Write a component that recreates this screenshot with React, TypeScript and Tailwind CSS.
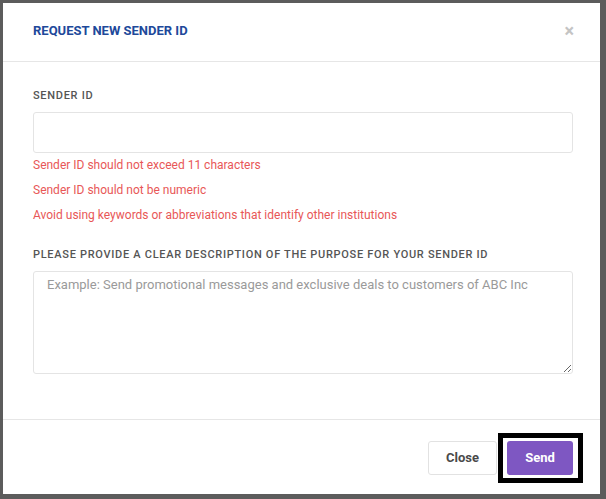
const ERRORS = [
  "Sender ID should not exceed 11 characters",
  "Sender ID should not be numeric",
  "Avoid using keywords or abbreviations that identify other institutions",
];

export default function App() {
  return (
    <div
      className="h-[499px] w-full overflow-hidden bg-[#5c5c5c] pt-[3px] pl-[3px] pr-[6px]"
      style={{ fontFamily: "Roboto, 'Liberation Sans', sans-serif" }}
    >
      <div className="flex h-[491px] flex-col bg-white">
        {/* Header */}
        <div className="flex items-center justify-between border-b border-[#e6e6e6] pt-[19px] pb-[21px] pl-[30px] pr-[27px]">
          <h2 className="text-[13px] leading-[18px] font-bold text-[#20489a]">
            REQUEST NEW SENDER ID
          </h2>
          <button className="mr-[-1px] text-[18px] leading-[18px] font-bold text-[#c4c4c4]">
            ×
          </button>
        </div>

        {/* Body */}
        <div className="flex flex-col pt-[26px] pb-[45px] pl-[30px] pr-[27px]">
          <label className="text-[11px] leading-4 font-medium tracking-[0.7px] text-[#555]">
            SENDER ID
          </label>
          <input
            className="mt-[8px] h-[41px] rounded-[3px] border border-[#e4e4e4] px-3 text-sm outline-none"
            type="text"
          />
          <div className="flex flex-col">
            {ERRORS.map((e) => (
              <p key={e} className="text-[12px] leading-[25px] text-[#e85757]">
                {e}
              </p>
            ))}
          </div>

          <label className="mt-[19px] text-[11px] leading-4 font-medium tracking-[0.7px] text-[#555]">
            PLEASE PROVIDE A CLEAR DESCRIPTION OF THE PURPOSE FOR YOUR SENDER ID
          </label>
          <textarea
            className="mt-[8px] h-[103px] rounded-[3px] border border-[#e4e4e4] px-[13px] pt-[3px] pb-[5px] text-[13px] leading-5 outline-none placeholder:text-[#9a9a9a]"
            placeholder="Example: Send promotional messages and exclusive deals to customers of ABC Inc"
          />
        </div>

        {/* Footer */}
        <div className="flex justify-end gap-[10px] border-t border-[#e6e6e6] pt-[21px] pr-[27px]">
          <button className="h-[34px] w-[69px] rounded-[3px] border border-[#e2e2e2] bg-white text-[13px] font-bold text-[#4a4a4a]">
            Close
          </button>
          <button className="relative h-[34px] w-[66px] rounded-[3px] bg-[#7e57c2] text-[13px] font-bold text-white">
            Send
            <span className="pointer-events-none absolute -top-[8px] -bottom-[8px] -left-[9px] -right-[10px] border-[5px] border-black" />
          </button>
        </div>
      </div>
    </div>
  );
}
